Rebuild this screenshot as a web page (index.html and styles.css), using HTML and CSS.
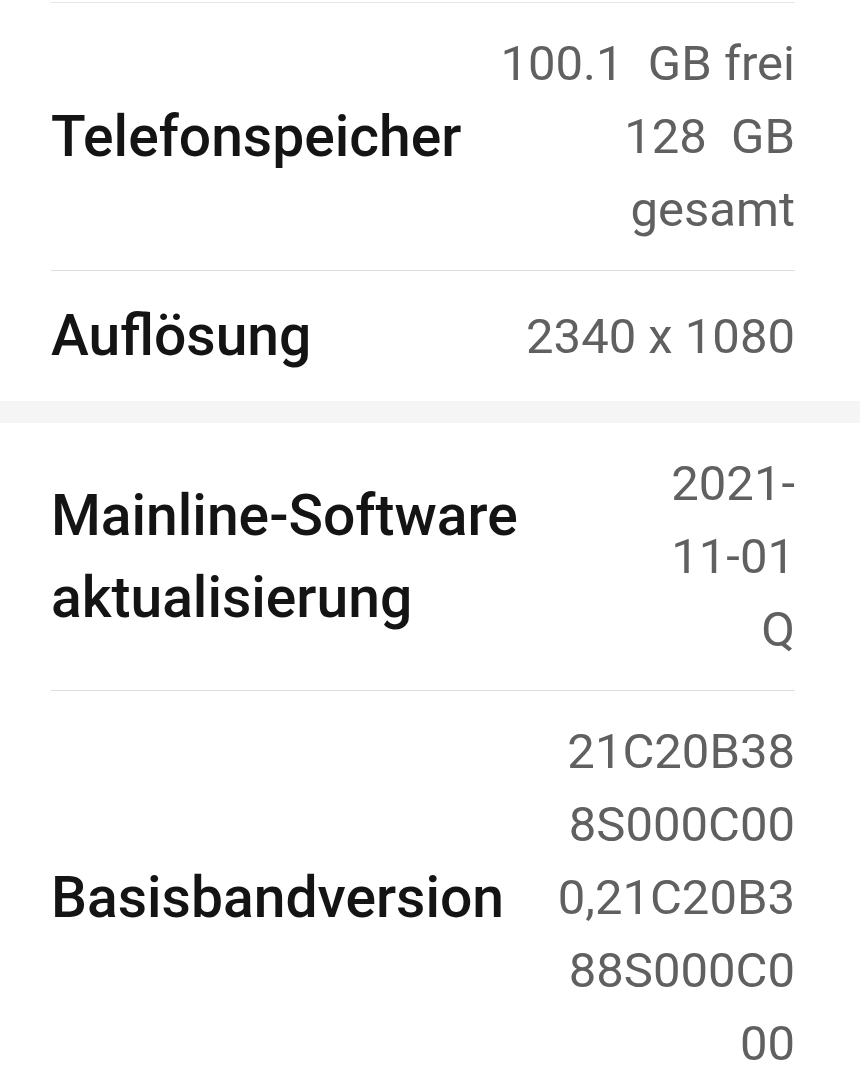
FILE: index.html
```html
<!DOCTYPE html>
<html lang="de">
<head>
<meta charset="utf-8"/>
<meta content="width=device-width, initial-scale=1.0" name="viewport"/>
<title>Softwareinformationen</title>
<link rel="stylesheet" href="styles.css">
</head>
<body>
<div class="group">
  <div class="row">
    <div class="label">Telefonspeicher</div>
    <div class="value">100.1&nbsp; GB frei<br/>128&nbsp; GB<br/>gesamt</div>
  </div>
  <div class="row">
    <div class="label">Auflösung</div>
    <div class="value">2340 x 1080</div>
  </div>
</div>
<div class="spacer"></div>
<div class="group">
  <div class="row">
    <div class="label">Mainline-Software<br/>aktualisierung</div>
    <div class="value">2021-<br/>11-01<br/>Q</div>
  </div>
  <div class="row">
    <div class="label">Basisbandversion</div>
    <div class="value">21C20B38<br/>8S000C00<br/>0,21C20B3<br/>88S000C0<br/>00</div>
  </div>
</div>
</body>
</html>
```

FILE: styles.css
```css
body {
  margin: 0;
  background: #fff;
  font-family: Roboto, "Noto Sans", sans-serif;
}
.group {
  padding: 2px 65px 0 51px;
}
.row {
  display: flex;
  align-items: center;
  justify-content: space-between;
  gap: 20px;
  padding: 24px 0;
  border-top: 1px solid #dedede;
}
.group .row:first-child {
  border-top: 1px solid #e6e6e6;
}
.spacer {
  height: 22px;
  background: #f5f5f5;
}
.spacer + .group {
  padding-top: 0;
}
.spacer + .group .row:first-child {
  border-top: none;
}
.label {
  color: #141414;
  font-size: 57px;
  font-weight: 500;
  line-height: 82px;
}
.value {
  color: #606060;
  font-size: 49px;
  line-height: 73px;
  text-align: right;
}
```
